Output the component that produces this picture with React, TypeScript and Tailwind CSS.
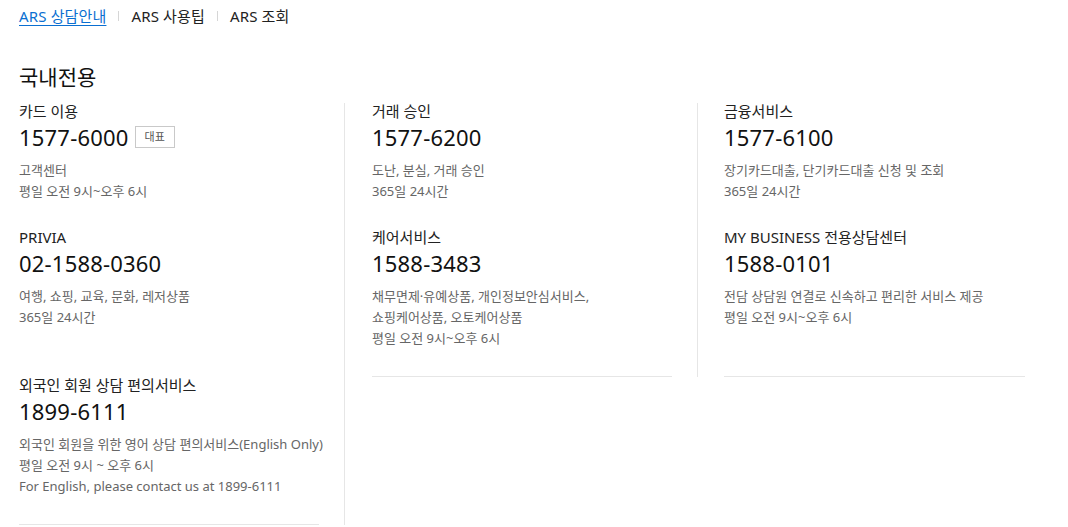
import React from "react";

type Item = {
  title: string;
  phone: string;
  badge?: string;
  lines: string[];
  bottomLine?: boolean;
};

const tabs = ["ARS 상담안내", "ARS 사용팁", "ARS 조회"];

const rows: (Item | null)[][] = [
  [
    { title: "카드 이용", phone: "1577-6000", badge: "대표", lines: ["고객센터", "평일 오전 9시~오후 6시"] },
    { title: "거래 승인", phone: "1577-6200", lines: ["도난, 분실, 거래 승인", "365일 24시간"] },
    { title: "금융서비스", phone: "1577-6100", lines: ["장기카드대출, 단기카드대출 신청 및 조회", "365일 24시간"] },
  ],
  [
    { title: "PRIVIA", phone: "02-1588-0360", lines: ["여행, 쇼핑, 교육, 문화, 레저상품", "365일 24시간"] },
    {
      title: "케어서비스",
      phone: "1588-3483",
      lines: ["채무면제·유예상품, 개인정보안심서비스,", "쇼핑케어상품, 오토케어상품", "평일 오전 9시~오후 6시"],
      bottomLine: true,
    },
    {
      title: "MY BUSINESS 전용상담센터",
      phone: "1588-0101",
      lines: ["전담 상담원 연결로 신속하고 편리한 서비스 제공", "평일 오전 9시~오후 6시"],
      bottomLine: true,
    },
  ],
  [
    {
      title: "외국인 회원 상담 편의서비스",
      phone: "1899-6111",
      lines: ["외국인 회원을 위한 영어 상담 편의서비스(English Only)", "평일 오전 9시 ~ 오후 6시", "For English, please contact us at 1899-6111"],
      bottomLine: true,
    },
    null,
    null,
  ],
];

const cellPad = [
  "pr-[25px] border-r border-[#e6e6e6]",
  "pl-[27px] pr-[25px] border-r border-[#e6e6e6]",
  "pl-[26px] pr-[26px]",
];

function Card({ item }: { item: Item }) {
  return (
    <div className={`flex-1 pb-[27px] ${item.bottomLine ? "border-b border-[#e6e6e6]" : ""}`}>
      <p className="text-[15px] leading-[17px] text-[#222]">{item.title}</p>
      <div className="mt-1 flex items-center gap-[6px]">
        <span className="text-[22px] leading-[26px] text-[#111] tracking-[0.2px]">{item.phone}</span>
        {item.badge && (
          <span className="flex h-[22px] items-center border border-[#c9c9c9] px-[9px] text-[11px] text-[#555]">
            {item.badge}
          </span>
        )}
      </div>
      <div className="mt-[10px] whitespace-nowrap text-[13px] leading-[21px] text-[#666]">
        {item.lines.map((l) => (
          <p key={l}>{l}</p>
        ))}
      </div>
    </div>
  );
}

export default function App() {
  return (
    <div
      className="min-h-[527px] bg-white px-[19px] pt-[6px]"
      style={{ fontFamily: '"Noto Sans", "Noto Sans CJK KR", sans-serif' }}
    >
      <nav className="flex items-center text-[15px] leading-[20px] tracking-[0.15px]">
        {tabs.map((t, i) => (
          <React.Fragment key={t}>
            {i > 0 && <span className="mx-[12px] h-[10px] w-px bg-[#d6d6d6]" />}
            <a
              className={
                i === 0
                  ? "text-[#0a6fd1] underline underline-offset-[3px] decoration-1"
                  : "text-[#222]"
              }
            >
              {t}
            </a>
          </React.Fragment>
        ))}
      </nav>

      <h2 className="mt-[38px] text-[21px] leading-[26px] text-[#111]">국내전용</h2>

      <div className="mt-[13px] grid grid-cols-[326px_353px_353px]">
        {rows.map((row, r) =>
          row.map((item, c) => (
            <div key={`${r}-${c}`} className={item ? `flex flex-col ${cellPad[c]}` : ""}>
              {item && <Card item={item} />}
            </div>
          ))
        )}
      </div>
    </div>
  );
}
